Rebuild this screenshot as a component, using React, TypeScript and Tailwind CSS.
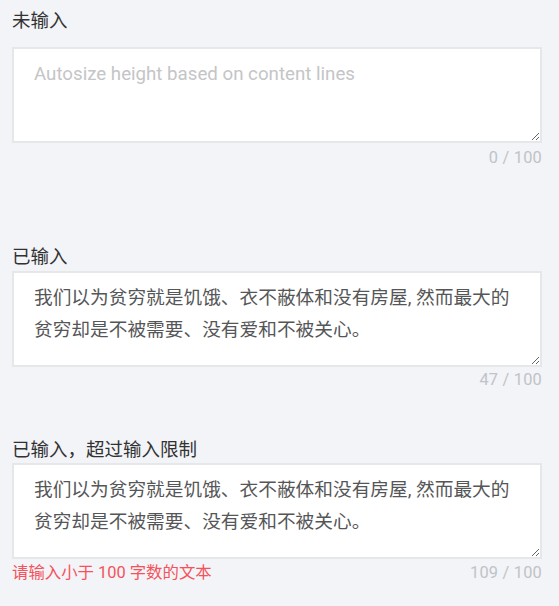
const longText =
  '我们以为贫穷就是饥饿、衣不蔽体和没有房屋, 然而最大的\n贫穷却是不被需要、没有爱和不被关心。'

function Field({
  label,
  value,
  placeholder,
  count,
  error,
  labelGap,
  countGap,
}: {
  label: string
  value?: string
  placeholder?: string
  count: string
  error?: string
  labelGap: string
  countGap: string
}) {
  return (
    <div className="w-[530px]">
      <p className="text-[18.5px] leading-[26px] text-[#323233]">{label}</p>
      <textarea
        className={`${labelGap} block w-full h-[96px] border-2 border-[#e6e7e9] bg-white pl-[20px] pr-[10px] pt-[9px] text-[18.7px] leading-[32px] text-[#555657] placeholder:text-[#c4c5c7] outline-none`}
        defaultValue={value}
        placeholder={placeholder}
      />
      <div className={`${countGap} flex justify-between items-center text-[16.4px] leading-[22px]`}>
        <span className="text-[#f5525c]">{error}</span>
        <span className="text-[#c0c3c8] tracking-[0.2px]">{count}</span>
      </div>
    </div>
  )
}

export default function App() {
  return (
    <div
      className="min-h-[606px] bg-[#f2f4f7] px-[12px] pt-[8px]"
      style={{ fontFamily: 'Roboto, "Noto Sans CJK SC", sans-serif' }}
    >
      <Field
        label="未输入"
        placeholder="Autosize height based on content lines"
        count="0 / 100"
        labelGap="mt-[13px]"
        countGap="mt-[4px]"
      />
      <div className="h-[75px]" />
      <Field label="已输入" value={longText} count="47 / 100" labelGap="mt-[1px]" countGap="mt-[2px]" />
      <div className="h-[46px]" />
      <Field
        label="已输入，超过输入限制"
        value={longText}
        count="109 / 100"
        error="请输入小于 100 字数的文本"
        labelGap="mt-0"
        countGap="mt-[3px]"
      />
    </div>
  )
}
